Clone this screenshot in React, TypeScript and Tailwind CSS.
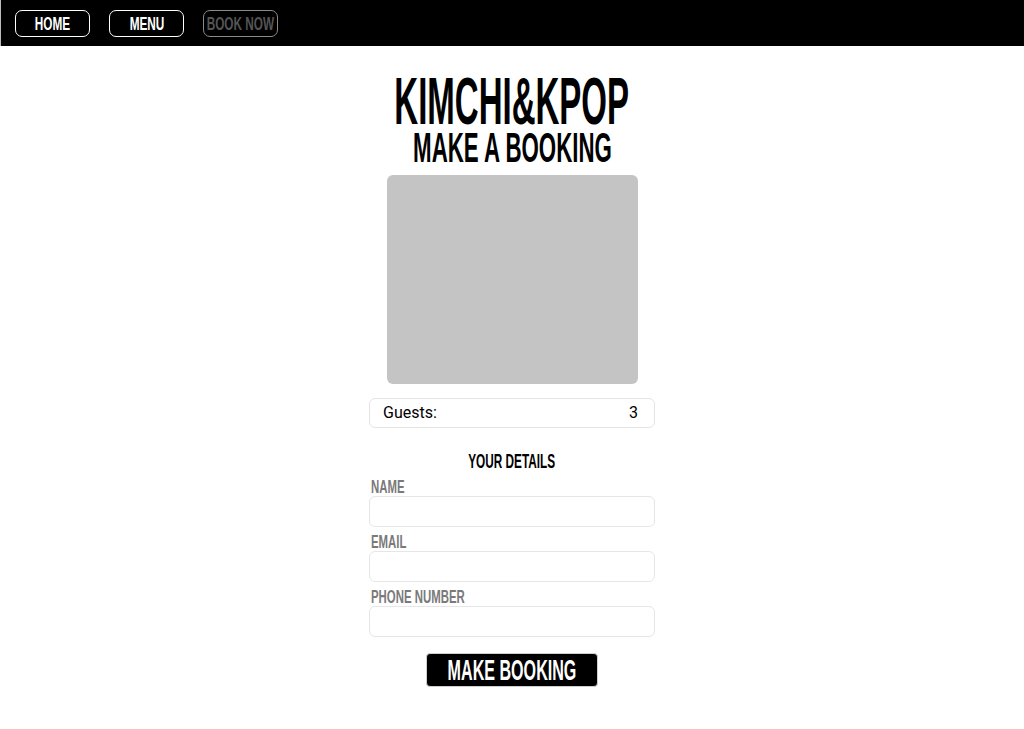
const cond = "font-['Liberation_Sans',Arial,sans-serif]";

function NavButton({ label, muted }: { label: string; muted?: boolean }) {
  return (
    <button
      className={
        "flex h-[27px] w-[75px] items-center justify-center rounded-[7px] border " +
        (muted ? "border-[#8a8a8a] text-[#555555]" : "border-white text-white")
      }
    >
      <span className={`${cond} inline-block scale-x-[0.62] text-[19px] leading-none font-bold whitespace-nowrap`}>
        {label}
      </span>
    </button>
  );
}

function Field({ label, first }: { label: string; first?: boolean }) {
  return (
    <div className="flex w-[286px] flex-col">
      <div className={(first ? "mt-[4px]" : "mt-[3px]") + " h-[20px] pl-[2px]"}>
        <span className={`${cond} inline-block origin-left scale-x-[0.6] text-[19px] leading-[20px] font-bold text-[#7a7a7a] whitespace-nowrap`}>
          {label}
        </span>
      </div>
      <div className="mt-[1px] h-[31px] rounded-[6px] border border-[#e6e6e6] bg-white" />
    </div>
  );
}

export default function App() {
  return (
    <div className="min-h-[729px] bg-white">
      <nav className="flex h-[46px] items-start gap-[19px] border-l border-[#bbb] bg-black pt-[10px] pl-[14px]">
        <NavButton label="HOME" />
        <NavButton label="MENU" />
        <NavButton label="BOOK NOW" muted />
      </nav>
      <main className="flex flex-col items-center">
        <h1 className={`${cond} mt-[27px] inline-block scale-x-[0.5] text-[66px] leading-[57px] font-bold text-black whitespace-nowrap`}>
          KIMCHI&amp;KPOP
        </h1>
        <h2 className={`${cond} inline-block scale-x-[0.53] text-[42px] leading-[36px] font-bold text-black whitespace-nowrap`}>
          MAKE A BOOKING
        </h2>
        <div className="mt-[9px] h-[209px] w-[251px] rounded-[6px] bg-[#c4c4c4]" />
        <div className="mt-[14px] flex h-[30px] w-[286px] items-center justify-between rounded-[6px] border border-[#e4e4e4] pr-[16px] pl-[13px] font-['Roboto',sans-serif] text-[16px] text-black">
          <span>Guests:</span>
          <span>3</span>
        </div>
        <div className="mt-[22px] h-[21px]">
          <span className={`${cond} inline-block scale-x-[0.59] text-[20px] leading-[21px] font-bold text-black whitespace-nowrap`}>
            YOUR DETAILS
          </span>
        </div>
        <Field label="NAME" first />
        <Field label="EMAIL" />
        <Field label="PHONE NUMBER" />
        <button className="mt-[16px] flex h-[34px] w-[172px] items-center justify-center rounded-[4px] border border-[#cfcfcf] bg-black">
          <span className={`${cond} inline-block scale-x-[0.555] text-[29px] leading-none font-bold text-white whitespace-nowrap`}>
            MAKE BOOKING
          </span>
        </button>
      </main>
    </div>
  );
}
